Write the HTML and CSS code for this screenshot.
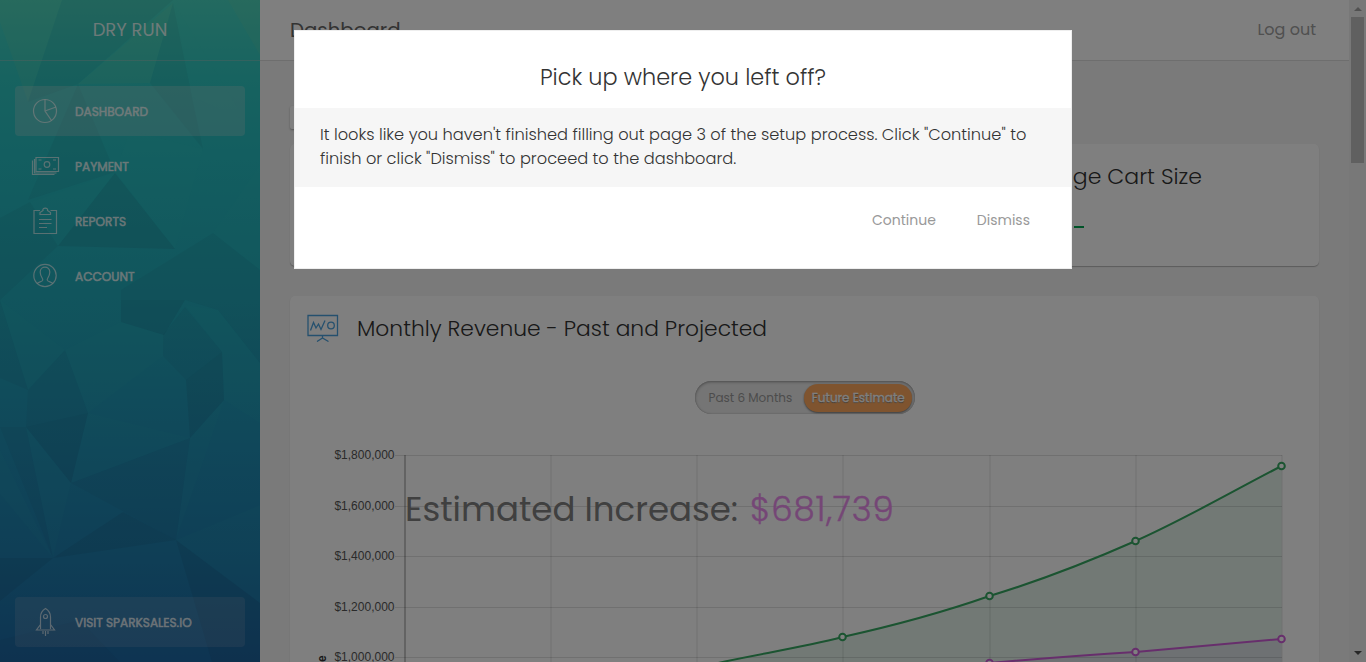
FILE: index.html
```
<!DOCTYPE html>
<html lang="en">
<head>
<meta charset="utf-8">
<title>Dashboard</title>
<link rel="stylesheet" href="styles.css">
</head>
<body>
<div class="app">
  <aside class="sidebar">
    <svg class="facets" viewBox="0 0 260 662" width="260" height="662">
      <defs><linearGradient id="sea" x1="0" y1="0" x2="0" y2="1">
        <stop offset="0" stop-color="#46d4c0"/><stop offset=".12" stop-color="#2ec6c0"/><stop offset=".24" stop-color="#26bcc0"/><stop offset=".45" stop-color="#22aaba"/><stop offset=".68" stop-color="#208eb4"/><stop offset=".85" stop-color="#1e7cac"/><stop offset="1" stop-color="#1c68a4"/>
      </linearGradient></defs>
      <rect width="260" height="662" fill="url(#sea)"/>
      <g class="lit">
        <path class="warm" d="M0 0H62L28 102 0 22ZM173 3 150 83 78 84ZM228 0H260V55Z"/>
        <path d="M175 5 245 120 192 97ZM130 131 203 149 175 249 115 172ZM115 173 30 202 58 246ZM213 233 260 165V270ZM0 300 65 350 28 390ZM26 427 71 483 53 558ZM88 413 190 438 71 483ZM185 305 218 310 260 363V423L224 400 222 352ZM190 438 224 400 176 540ZM176 540 260 505V603ZM0 450 53 558 0 494ZM65 350 121 322 164 335 163 356 88 413Z"/>
      </g>
      <g class="shade">
        <path d="M62 0H173L78 84 28 102ZM150 83 173 3 192 97 203 149ZM78 84 115 172 28 200ZM30 202 58 246 0 300V218ZM65 350 88 413 26 427 28 390ZM71 483 190 438 176 540ZM163 335 185 307 222 352 186 380 163 356ZM0 640 80 620 120 662H0ZM213 233 260 270V363L218 310 185 300H121V290ZM0 300 28 390 0 378ZM0 427 26 427 53 558Z"/>
        <path class="deep" d="M115 173 175 249 58 246ZM121 300H185L164 335 121 322ZM26 427 88 413 71 483ZM186 380 222 352 224 400 190 438ZM123 512 176 540 53 558ZM0 558H53L0 601ZM176 540 260 603V662H212Z"/>
      </g>
    </svg>
    <div class="brand"><span>DRY RUN</span></div>
    <nav class="nav">
      <a class="item active"><svg class="ico" viewBox="0 0 30 30"><circle cx="15" cy="15" r="11.5"/><path d="M15 3.500V15L21.500 24.500M15 15 26 11"/></svg><span>DASHBOARD</span></a>
      <a class="item"><svg class="ico" viewBox="0 0 30 30"><path d="M6 6.500H28.500V20.500H6ZM4.500 8V22H26.500M2.500 9.500V23.500H24.500M8.500 9H11.500M23 9H26M8.500 18H11.500M23 18H26"/><circle cx="17" cy="13.500" r="2.800"/></svg><span>PAYMENT</span></a>
      <a class="item"><svg class="ico" viewBox="0 0 30 30"><path d="M10 4.500H4V27.500H26.500V4.500H20.500M10 8.500V6.500L13 4.500C12 1.200 18.500 1.200 17.500 4.500L20.500 6.500V8.500ZM9 13.500H21.500M9 17.500H21.500M9 21.500H17"/></svg><span>REPORTS</span></a>
      <a class="item"><svg class="ico" viewBox="0 0 30 30"><circle cx="15" cy="14.500" r="11.200"/><path d="M7 22.500C8.500 20.500 12.500 21 12.800 19C13 17 10.200 15.500 10.200 11C10.200 4.500 19.800 4.500 19.800 11C19.800 15.500 17 17 17.200 19C17.500 21 21.500 20.500 23 22.500"/></svg><span>ACCOUNT</span></a>
    </nav>
    <a class="item visit"><svg class="ico" viewBox="0 0 30 30"><path d="M10.500 22V10C10.500 6.500 13 3 15.500 1.500C18 3 20.500 6.500 20.500 10V22M10.500 17.500 6.500 23H24.500L20.500 17.500M13 24V27M15.500 24V29M18 24V27"/><circle cx="15.500" cy="9.500" r="2"/></svg><span>VISIT SPARKSALES.IO</span></a>
  </aside>
  <div class="page">
    <header class="topbar"><h1>Dashboard</h1><a class="logout">Log out</a></header>
    <main class="content">
      <div class="chip"></div>
      <section class="card stats"><div class="stat"><h2>Average Cart Size</h2><i class="dash"></i></div></section>
      <section class="card revenue">
        <div class="head">
          <svg class="board" viewBox="0 0 32 28"><path d="M1 1.500H30.500V21.500H1ZM15.500 21.500V24.500M10 27.500 15.500 24 21.500 27.500M3.500 16.500 6.500 8.500 9 14 11.500 10 14 15.500 18 6.500"/><circle cx="24" cy="11.500" r="3.300"/></svg>
          <h2 class="rev">Monthly Revenue - Past and Projected</h2>
        </div>
        <div class="toggle"><span class="past">Past 6 Months</span><span class="future">Future Estimate</span></div>
        <div class="chart">
          <svg viewBox="290 430 1029 232" width="1029" height="232">
            <path class="area green" d="M405 712C500 707 620 683 725 661.500C765 653 803 647 842.500 637C892 626 941 613 989.500 596C1039 581 1088 562 1135.500 541C1185 519 1233 491 1281.500 466V662H725Z"/>
            <path class="area purple" d="M989.500 663Q1070 656 1135.500 652L1281.500 639V662Z"/>
            <path class="grid" d="M395 455.500H1282M395 506.500H1282M395 556.500H1282M395 607.500H1282M395 657.500H1282"/>
            <path class="grid cols" d="M551 455V662M697 455V662M843 455V662M990 455V662M1136 455V662M1282 455V662"/>
            <path class="axis" d="M405 455V662"/>
            <g class="ticks"><text x="394.500" y="459">$1,800,000</text><text x="394.500" y="510">$1,600,000</text><text x="394.500" y="560">$1,400,000</text><text x="394.500" y="611">$1,200,000</text><text x="394.500" y="661">$1,000,000</text></g>
            <text class="ylabel" transform="translate(326 662) rotate(-90)">e</text>
            <path class="line green" d="M700 667 725 661.500C765 653 803 647 842.500 637C892 626 941 613 989.500 596C1039 581 1088 562 1135.500 541C1185 519 1233 491 1281.500 466"/>
            <path class="line purple" d="M970 665 989.500 663Q1070 656 1135.500 652L1281.500 639"/>
            <g class="dots green"><circle cx="842.500" cy="637" r="3.300"/><circle cx="989.500" cy="596" r="3.300"/><circle cx="1135.500" cy="541" r="3.300"/><circle cx="1281.500" cy="466" r="3.300"/></g>
            <g class="dots purple"><circle cx="989.500" cy="663" r="3.300"/><circle cx="1135.500" cy="652" r="3.300"/><circle cx="1281.500" cy="639" r="3.300"/></g>
          </svg>
          <p class="increase">Estimated Increase: <b>$681,739</b></p>
        </div>
      </section>
    </main>
  </div>
  <div class="scroll"><i class="up"></i><i class="thumb"></i><i class="down"></i></div>
</div>
<div class="overlay">
  <div class="modal">
    <h3>Pick up where you left off?</h3>
    <p class="message">It looks like you haven't finished filling out page 3 of the setup process. Click "Continue" to<br>finish or click "Dismiss" to proceed to the dashboard.</p>
    <div class="actions"><a>Continue</a><a>Dismiss</a></div>
  </div>
</div>
</body>
</html>
```
FILE: styles.css
```
* { box-sizing: border-box; }
html, body { margin: 0; height: 662px; overflow: hidden; }
body { font-family: Poppins, Inter, "Open Sans", sans-serif; font-weight: 300; color: #444; }
h1, h2, h3, p { margin: 0; font-weight: 300; }
span, a, h1, h2, h3, p { white-space: nowrap; }
.app { display: flex; height: 662px; }

.sidebar { position: relative; width: 260px; flex: none; display: flex; flex-direction: column; overflow: hidden; }
.facets { position: absolute; inset: 0; }
.lit { fill: #3cdcc0; fill-opacity: .05; }
.warm { fill: #a0d890; fill-opacity: .1; }
.shade { fill: #203050; fill-opacity: .06; }
.deep { fill-opacity: .1; }
.brand { position: relative; height: 61px; padding-bottom: 2px; border-bottom: 1px solid rgba(200,190,190,.35); display: flex; justify-content: center; align-items: center; color: #ffffffd0; font-size: 18px; font-weight: 400; }
.nav { position: relative; padding: 25px 15px 0; display: flex; flex-direction: column; gap: 5px; }
.item { height: 50px; padding-left: 15px; display: flex; align-items: center; gap: 15px; border-radius: 4px; color: #ffffffb0; font-size: 12.1px; font-weight: 400; -webkit-text-stroke: .6px #ffffffb0; }
.item span { padding-top: 1px; }
.active { background: rgba(255,225,225,.21); }
.visit { position: relative; margin: auto 15px 15px; width: 230px; background: rgba(255,225,225,.12); }
.ico { width: 30px; height: 30px; fill: none; stroke: #fff; stroke-opacity: .65; stroke-width: 1.2; }

.page { flex: 1; background: #f4f4f4; }
.topbar { height: 61px; padding: 0 33px 1px 30px; display: flex; justify-content: space-between; align-items: center; background: #fff; border-bottom: 1px solid #ddd; }
h1 { font-size: 19.8px; font-weight: 400; color: #666; }
.logout { padding-bottom: 1px; font-size: 16px; font-weight: 400; color: #a0a0a0; }
.content { padding: 45px 30px 0; }
.chip { width: 110px; height: 23px; margin-bottom: 15px; background: #fff; border-radius: 2px; box-shadow: 0 1px 2px #aaa; }
.card { background: #fff; border-radius: 5px; box-shadow: 0 1px 1px rgba(0,0,0,.25); }
.stats { height: 122px; margin-bottom: 30px; padding: 19px 117px 0 0; display: flex; justify-content: flex-end; }
.stat { display: flex; flex-direction: column; }
h2 { font-size: 22px; line-height: 28px; color: #333; }
.dash { width: 10px; height: 2px; margin: 35px 0 0 64px; background: #00a651; }
.revenue { height: 366px; border-radius: 5px 5px 0 0; }
.head { height: 64px; padding-left: 17px; display: flex; align-items: center; gap: 18px; }
.rev { padding-top: 2px; font-size: 21.8px; }
.board { width: 32px; height: 28px; fill: none; stroke: #4ba1dc; stroke-width: 1.3; }
.toggle { width: 220px; height: 33px; margin: 21px auto 0 405px; padding: 3px; display: flex; align-items: center; border-radius: 17px; background: #eaeaea; box-shadow: inset 0 1px 3px #999, inset 0 0 1px #999; font-size: 12px; font-weight: 400; }
.past { width: 106px; padding-left: 10.5px; color: #999; }
.future { width: 109px; height: 28px; padding-left: 1px; line-height: 28px; text-align: center; border-radius: 14px; background: #ffa95e; color: #fff; -webkit-text-stroke: .3px #fff; text-shadow: 0 1px 1px #777; box-shadow: 0 1px 2px #777; }
.chart { position: relative; height: 232px; margin-top: 16px; }
.chart svg { display: block; }
.grid { stroke: #000; stroke-opacity: .12; fill: none; }
.cols { stroke-width: 2; stroke-opacity: .06; }
.axis { stroke: #000; stroke-opacity: .22; stroke-width: 2; }
.ticks { font: 12px "Liberation Sans", sans-serif; text-anchor: end; fill: #555; }
.ylabel { font: bold 12px "Liberation Sans", sans-serif; fill: #333; }
.area.green { fill: #2a9a58; fill-opacity: .12; }
.area.purple { fill: #9050c8; fill-opacity: .1; }
.line { fill: none; stroke-width: 2; }
.line.green, .dots.green { stroke: #36a862; }
.line.purple, .dots.purple { stroke: #cf5cd8; }
.dots { fill: #fff; stroke-width: 2; }
.increase { position: absolute; left: 115px; top: 55px; font-size: 34px; line-height: 48px; font-weight: 400; color: #808080; }
.increase b { margin-left: 3px; font-weight: 300; letter-spacing: .8px; color: #ea8ced; -webkit-text-stroke: .4px #ea8ced; }

.scroll { width: 17px; background: #f1f1f1; display: flex; flex-direction: column; align-items: center; }
.up { margin: 7px 0 6px; border: 4px solid transparent; border-top: 0; border-bottom-color: #a3a3a3; }
.thumb { width: 13px; height: 146px; background: #c1c1c1; }
.down { margin: auto 0 7px; border: 4px solid transparent; border-bottom: 0; border-top-color: #505050; }

.overlay { position: fixed; inset: 0; padding-top: 30px; background: rgba(0,0,0,.5); }
.modal { width: 778px; height: 239px; margin: 0 auto; border: 1px solid #eee; background: #fff; color: #333; }
h3 { height: 77px; padding-top: 30px; text-align: center; font-size: 22.4px; line-height: 33px; }
.message { height: 79px; padding: 15px 25px; background: #f6f6f6; font-size: 16.22px; line-height: 24px; }
.actions { padding: 21px 41px 0 0; display: flex; justify-content: flex-end; gap: 41px; font-size: 14px; line-height: 24px; font-weight: 400; color: #999; }
```
